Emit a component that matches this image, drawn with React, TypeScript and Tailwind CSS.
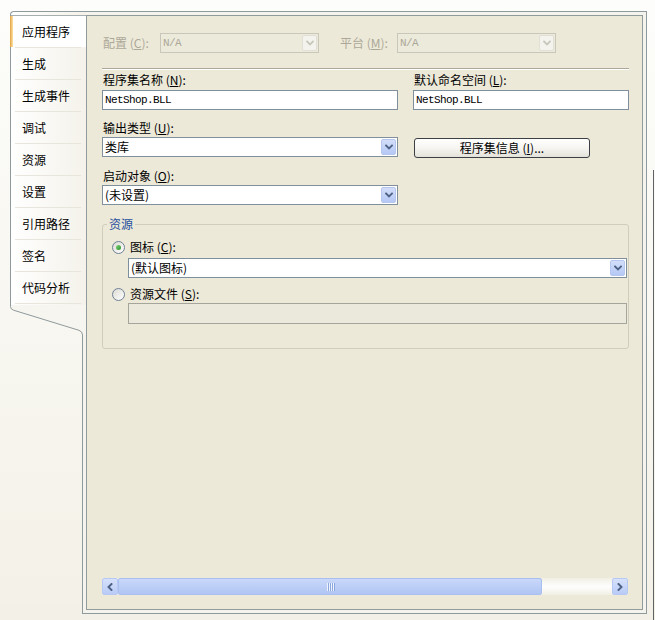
import * as React from 'react';

// --- shared font stacks ---
const UI = "font-['Noto_Sans_CJK_SC',sans-serif]";
const MONO = "font-['Liberation_Mono','Noto_Sans_CJK_SC',monospace]";

const tabs = ['应用程序', '生成', '生成事件', '调试', '资源', '设置', '引用路径', '签名', '代码分析'];

function Chevron({ dir = 'down', color = '#4d6185' }: { dir?: 'down' | 'left' | 'right'; color?: string }) {
    const d = dir === 'down' ? 'M1 1.5 L4 4.5 L7 1.5' : dir === 'left' ? 'M4.5 1 L1.5 4 L4.5 7' : 'M1.5 1 L4.5 4 L1.5 7';
    const w = dir === 'down' ? 8 : 6;
    const h = dir === 'down' ? 6 : 8;
    return (
        <svg width={w} height={h} viewBox={`0 0 ${w} ${h}`}>
            <path d={d} fill="none" stroke={color} strokeWidth="1.9" strokeLinecap="square" />
        </svg>
    );
}

function Combo({ value, className = '', disabled = false, mono = false }: { value: string; className?: string; disabled?: boolean; mono?: boolean }) {
    return (
        <div className={`flex h-[20px] items-stretch border ${disabled ? 'border-[#c9c7ba] bg-[#ebeadb]' : 'border-[#7f8f9c] bg-white'} ${className}`}>
            <span className={`flex flex-1 items-center pl-[2px] ${disabled ? 'text-[#aca899]' : 'text-black'} ${mono ? `${MONO} text-[11px] tracking-[-0.6px]` : 'text-[12px]'}`}>
                {value}
            </span>
            <span
                className={`m-px flex w-[15px] items-center justify-center rounded-[2px] border ${
                    disabled ? 'border-[#e2e0d6] bg-[#f4f3ee]' : 'border-[#b5c6ef] bg-gradient-to-b from-[#d3def9] to-[#b5c8f5]'
                }`}
            >
                <Chevron color={disabled ? '#c9c7ba' : '#4d6185'} />
            </span>
        </div>
    );
}

function TextBox({ value, className = '' }: { value: string; className?: string }) {
    return (
        <div className={`flex h-[20px] items-center border border-[#7f8f9c] bg-white pl-[2px] ${MONO} text-[11px] tracking-[-0.6px] text-black ${className}`}>
            {value}
        </div>
    );
}

function Label({ children, disabled = false, className = '' }: { children: React.ReactNode; disabled?: boolean; className?: string }) {
    return (
        <div className={`h-[16px] whitespace-nowrap text-[12px] leading-[16px] ${disabled ? 'text-[#aca899]' : 'text-black'} ${className}`}>
            {children}
        </div>
    );
}

function Radio({ checked }: { checked?: boolean }) {
    return (
        <span className="flex h-[13px] w-[13px] items-center justify-center rounded-full border border-[#6f8094] bg-gradient-to-br from-[#dcdbd3] to-white">
            {checked && <span className="h-[5px] w-[5px] rounded-full bg-gradient-to-br from-[#7fd27f] to-[#219221]" />}
        </span>
    );
}

function ScrollBar() {
    return (
        <div className="mr-px flex h-[17px] bg-gradient-to-b from-[#f1efe4] via-[#fefefe] to-[#f1efe4]">
            <div className="flex w-[16px] items-center justify-center rounded-[2px] border border-[#b6c9f5] bg-gradient-to-b from-[#d6e1fb] to-[#b9cbf6]">
                <Chevron dir="left" />
            </div>
            <div className="flex w-[424px] items-center justify-center rounded-[2px] border border-[#a9bff0] bg-gradient-to-b from-[#c9d8fa] to-[#b0c5f3]">
                <div className="flex gap-[1px]">
                    {[0, 1, 2, 3].map((i) => (
                        <span key={i} className="h-[8px] w-[1px] bg-[#eef3fe] shadow-[1px_0_0_#8ca6de]" />
                    ))}
                </div>
            </div>
            <div className="flex-1" />
            <div className="flex w-[16px] items-center justify-center rounded-[2px] border border-[#b6c9f5] bg-gradient-to-b from-[#d6e1fb] to-[#b9cbf6]">
                <Chevron dir="right" />
            </div>
        </div>
    );
}

export default function App() {
    return (
        <div className={`flex h-[620px] w-[655px] overflow-hidden bg-gradient-to-b from-[#fdfdfb] to-[#f3f1e7] pl-[10px] pt-[11px] ${UI}`}>
            {/* --- Tab column --- */}
            <div className="flex h-[603px] w-[76px] flex-col">
                <div className="rounded-tl-[4px] border-l border-t border-[#8f9a9c] bg-gradient-to-r from-white to-[#f4f2ea] pb-px pt-[3px]">
                    {tabs.map((t, i) => (
                        <React.Fragment key={t}>
                            {i === 0 ? (
                                <div className="relative flex h-[32px] items-center border-t border-[#a7aeb0] bg-white pl-[11px] text-[12px] text-black">
                                    <span className="absolute -left-px bottom-0 top-0 w-[3px] bg-gradient-to-r from-[#e3a23a] to-[#fbe3a8]" />
                                    {t}
                                </div>
                            ) : (
                                <div className="flex h-[31px] items-center pl-[11px] text-[12px] text-black">{t}</div>
                            )}
                            <div className="ml-[4px] mr-[5px] h-px bg-[#e8e6dc]" />
                        </React.Fragment>
                    ))}
                </div>
                <svg width="76" height="30" viewBox="0 0 76 30" className="block">
                    <path d="M0 0 H76 V30 H72.5 Q72.5 26.5 69 25.3 L3.5 5.2 Q0.5 4.2 0.5 1.5 V0 Z" fill="#f6f5ef" />
                    <path d="M0.5 0 V1.5 Q0.5 4.2 3.5 5.2 L69 25.3 Q72.5 26.5 72.5 30" fill="none" stroke="#8f9a9c" strokeWidth="1" />
                </svg>
                <div className="ml-[72px] w-[4px] flex-1 border-b border-l border-[#8f9a9c] bg-[#f4f3ee]" />
            </div>

            {/* --- Property page frame --- */}
            <div className="h-[603px] w-[561px] border-b border-r border-t border-[#8f9a9c] bg-[#f4f3ee] pb-[3px] pr-[3px] pt-[3px]">
                <div className="flex h-full flex-col border border-[#919b9c] bg-[#ece9d8] pb-[14px] pl-[15px] pr-[13px]">
                    {/* Configuration / platform (disabled) */}
                    <div className="mt-[17px] flex items-center">
                        <Label disabled className="w-[58px] pl-px">
                            配置 (<u>C</u>):
                        </Label>
                        <Combo value="N/A" disabled mono className="w-[159px]" />
                        <Label disabled className="ml-[21px] w-[57px]">
                            平台 (<u>M</u>):
                        </Label>
                        <Combo value="N/A" disabled mono className="w-[159px]" />
                    </div>

                    <div className="mt-[15px] h-px bg-[#aca899] shadow-[0_1px_0_#ffffff]" />

                    {/* Assembly name / default namespace */}
                    <div className="mt-[3px] flex gap-[15px]">
                        <div className="flex w-[296px] flex-col">
                            <Label className="pl-px">
                                程序集名称 (<u>N</u>):
                            </Label>
                            <TextBox value="NetShop.BLL" className="mt-[2px]" />
                            <Label className="mt-[10px] pl-px">
                                输出类型 (<u>U</u>):
                            </Label>
                            <Combo value="类库" className="mt-px" />
                            <Label className="mt-[11px] pl-px">
                                启动对象 (<u>O</u>):
                            </Label>
                            <Combo value="(未设置)" className="mt-px" />
                        </div>
                        <div className="flex flex-1 flex-col">
                            <Label className="pl-px">
                                默认命名空间 (<u>L</u>):
                            </Label>
                            <TextBox value="NetShop.BLL" className="mt-[2px]" />
                            <button className="ml-px mt-[28px] flex h-[20px] w-[176px] items-center justify-center rounded-[3px] border border-[#3c3f44] bg-gradient-to-b from-white via-[#f6f5f1] to-[#e3e2da] text-[12px] text-black">
                                程序集信息 (<u>I</u>)...
                            </button>
                        </div>
                    </div>

                    {/* Resources group */}
                    <div className="relative mt-[19px] rounded-[3px] border border-[#d0cdbd] pb-[24px] pl-[9px] pr-px pt-[14px]">
                        <span className="absolute -top-[9px] left-[4px] bg-[#ece9d8] px-[2px] text-[12px] leading-[16px] text-[#1f4e9e]">资源</span>
                        <div className="flex h-[16px] items-center gap-[5px]">
                            <Radio checked />
                            <span className="text-[12px] leading-[16px] text-black">
                                图标 (<u>C</u>):
                            </span>
                        </div>
                        <Combo value="(默认图标)" className="ml-[16px] mt-[3px]" />
                        <div className="mt-[8px] flex h-[16px] items-center gap-[5px]">
                            <Radio />
                            <span className="text-[12px] leading-[16px] text-black">
                                资源文件 (<u>S</u>):
                            </span>
                        </div>
                        <div className="ml-[16px] mt-px h-[21px] border border-[#a5a59c] bg-[#ebe9dc]" />
                    </div>

                    <div className="mt-auto">
                        <ScrollBar />
                    </div>
                </div>
            </div>

            {/* window edge on the right */}
            <div className="ml-[6px] mt-[159px] w-px self-stretch bg-[#5f6366]" />
        </div>
    );
}
